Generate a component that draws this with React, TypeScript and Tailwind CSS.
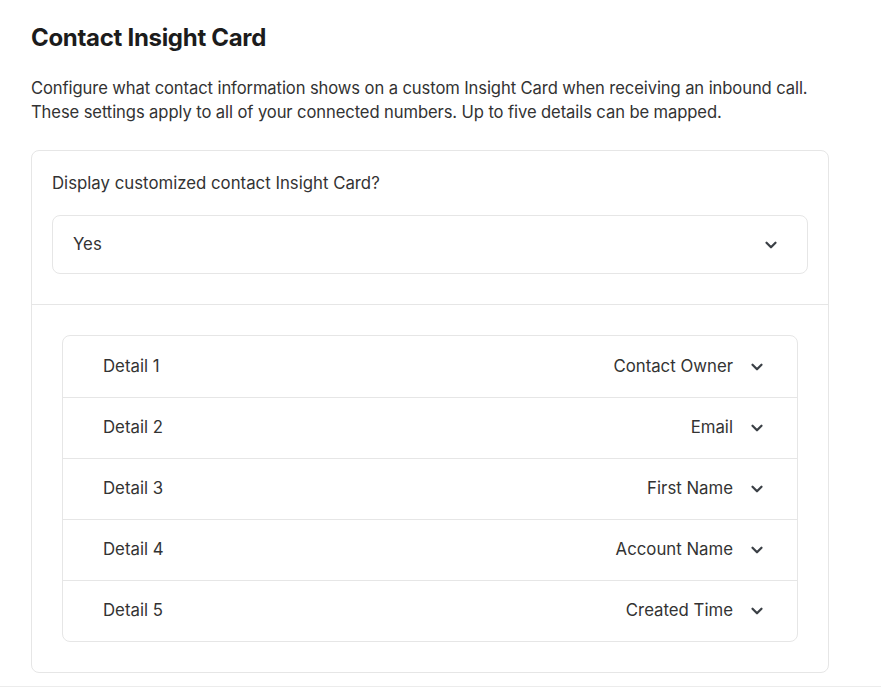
import { ChevronDown } from 'lucide-react';

const details = [
  { label: 'Detail 1', value: 'Contact Owner' },
  { label: 'Detail 2', value: 'Email' },
  { label: 'Detail 3', value: 'First Name' },
  { label: 'Detail 4', value: 'Account Name' },
  { label: 'Detail 5', value: 'Created Time' },
];

function Chevron() {
  return <ChevronDown size={18} strokeWidth={3} className="text-[#3b4046]" />;
}

export default function App() {
  return (
    <div className="min-h-[688px] w-[881px] bg-white font-['Inter',sans-serif] text-[#2f2f2f]">
      <div className="border-b border-[#ececec] px-[31px] pb-[13px] pt-[23px]">
        <h1 className="text-[24px] font-bold leading-[30px] tracking-[-0.3px] text-[#1c1c1c]">
          Contact Insight Card
        </h1>
        <p className="mt-[24px] text-[16.6px] leading-[23.5px] tracking-[-0.1px] text-[#333]">
          Configure what contact information shows on a custom Insight Card when receiving an inbound call.
          <br />
          These settings apply to all of your connected numbers. Up to five details can be mapped.
        </p>

        <section className="mt-[26px] w-[798px] rounded-[8px] border border-[#e6e6e6]">
          <div className="px-[20px] pb-[30px] pt-[22px]">
            <p className="text-[16.8px] leading-[20px] text-[#333]">Display customized contact Insight Card?</p>
            <div className="mt-[22px] flex h-[59px] items-center justify-between rounded-[8px] border border-[#e6e6e6] pl-[20px] pr-[27px]">
              <span className="text-[16.8px] text-[#333]">Yes</span>
              <Chevron />
            </div>
          </div>

          <div className="border-t border-[#e6e6e6] px-[30px] pb-[30px] pt-[30px]">
            <div className="rounded-[8px] border border-[#e6e6e6]">
              {details.map((d, i) => (
                <div
                  key={d.label}
                  className={`flex h-[61px] items-center justify-between pl-[40px] pr-[31px] ${
                    i > 0 ? 'border-t border-[#e6e6e6]' : ''
                  }`}
                >
                  <span className="text-[16.8px] text-[#333]">{d.label}</span>
                  <div className="flex items-center gap-[15px]">
                    <span className="text-[16.8px] text-[#333]">{d.value}</span>
                    <Chevron />
                  </div>
                </div>
              ))}
            </div>
          </div>
        </section>
      </div>
    </div>
  );
}
